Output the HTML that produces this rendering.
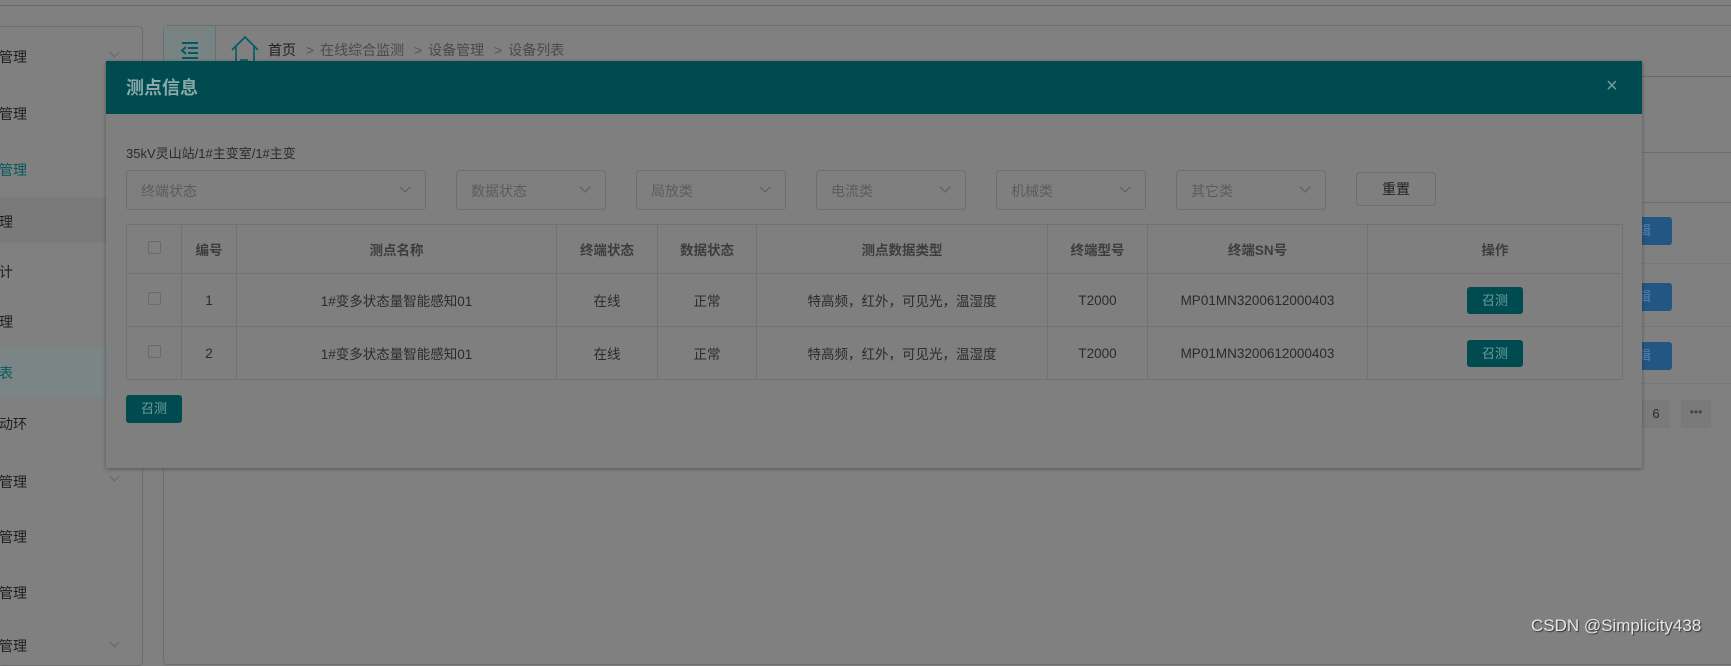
<!DOCTYPE html>
<html><head><meta charset="utf-8"><style>
*{box-sizing:border-box;margin:0;padding:0}
body{width:1731px;height:649px;overflow:hidden;background:#808080;font-family:"Liberation Sans","Noto Sans CJK SC",sans-serif;position:relative;color:#2b2b2b}
.a{position:absolute}
.side{left:-2px;top:26px;width:145px;height:640px;border:1px solid #6e6e6e;border-radius:4px;background:#808080}
.si{position:absolute;left:0;font-size:14px;color:#1e1e1e}
.chev{position:absolute;left:112px;width:7px;height:7px;border-right:1px solid #666;border-bottom:1px solid #666;transform:rotate(45deg)}
.main{left:163px;top:25px;width:1600px;height:640px;border:1px solid #6e6e6e;border-radius:4px;background:#808080}
.modal{left:106px;top:61px;width:1536px;height:407px;background:#7f7f7f;box-shadow:0 1px 4px rgba(0,0,0,.35)}
.hd{left:0;top:0;width:1536px;height:53px;background:#004b4f}
.sel{top:170px;height:40px;border:1px solid #6e6e6e;border-radius:4px;font-size:14px;color:#5c5c5c;padding:10px 0 0 14px}
.sel:after{content:"";position:absolute;right:16px;top:12px;width:7px;height:7px;border-right:1px solid #5c5c5c;border-bottom:1px solid #5c5c5c;transform:rotate(45deg)}
table{position:absolute;left:126px;top:224px;border-collapse:collapse;font-size:13.5px}
td,th{border:1px solid #727272;text-align:center;color:#2b2b2b;font-weight:normal}
th{height:49px;color:#3d3d3d;font-weight:bold}
td{height:53px}
.cb{display:inline-block;width:13px;height:13px;border:1px solid #6a6a6a;border-radius:2px}
.btn{display:inline-block;background:#004b4f;color:#6f9d9f;font-size:13px;border-radius:3px;width:56px;height:27px;line-height:27px;text-align:center}
.blue{left:1632px;width:40px;height:28px;background:#245683;border-radius:3px;color:#5a82a8;font-size:13px;line-height:28px;padding-left:6px}
</style></head><body>
<div class="a" style="left:0;top:5px;width:1731px;height:1px;background:#6a6a6a"></div>
<div class="a side">
<div class="si" style="top:20px">管理</div><div class="chev" style="top:22px"></div>
<div class="si" style="top:77px">管理</div>
<div class="si" style="top:133px;color:#005a5e">管理</div>
<div class="a" style="left:0;top:170px;width:143px;height:46px;background:#7a7a7a"></div>
<div class="si" style="top:185px">理</div>
<div class="si" style="top:235px">计</div>
<div class="si" style="top:285px">理</div>
<div class="a" style="left:0;top:320px;width:143px;height:50px;background:#7b8585"></div>
<div class="si" style="top:336px;color:#005a5e">表</div>
<div class="si" style="top:387px">动环</div>
<div class="si" style="top:445px">管理</div><div class="chev" style="top:446px"></div>
<div class="si" style="top:500px">管理</div>
<div class="si" style="top:556px">管理</div>
<div class="si" style="top:609px">管理</div><div class="chev" style="top:612px"></div>
</div>
<div class="a main">
<div class="a" style="left:0;top:0;width:52px;height:50px;background:#788484;border-right:1px solid #6e6e6e"></div>
<svg class="a" style="left:16px;top:15px" width="20" height="18"><g stroke="#005a5e" stroke-width="2"><path d="M2 2H18M8 7H18M8 12H18M2 17H18"/><path d="M6 6L2 9.5L6 13" fill="none"/></g></svg>
<svg class="a" style="left:66px;top:8px" width="30" height="36"><path d="M2 16L15 3L28 16M6 13V36M24 13V36M11 36V26H17V36" fill="none" stroke="#005a5e" stroke-width="1.6"/></svg>
<div class="a" style="left:104px;top:14px;font-size:14px;color:#1e1e1e">首页 <span style="color:#555;margin:0 6px">&gt;</span><span style="color:#4a4a4a">在线综合监测</span> <span style="color:#555;margin:0 6px">&gt;</span><span style="color:#4a4a4a">设备管理</span> <span style="color:#555;margin:0 6px">&gt;</span><span style="color:#4a4a4a">设备列表</span></div>
<div class="a" style="left:0;top:50px;width:1600px;height:1px;background:#6a6a6a"></div>
<div class="a" style="left:1470px;top:126px;width:140px;height:1px;background:#6e6e6e"></div>
<div class="a" style="left:1470px;top:176px;width:140px;height:1px;background:#6e6e6e"></div>
</div>
<div class="a blue" style="top:217px">辑</div>
<div class="a blue" style="top:283px">辑</div>
<div class="a blue" style="top:342px">辑</div>
<div class="a" style="left:1642px;top:263px;width:89px;height:1px;background:#777"></div>
<div class="a" style="left:1642px;top:326px;width:89px;height:1px;background:#777"></div>
<div class="a" style="left:1642px;top:383px;width:89px;height:1px;background:#777"></div>
<div class="a" style="left:1642px;top:400px;width:28px;height:28px;background:#7a7a7a;font-size:13px;text-align:center;line-height:28px;color:#2b2b2b">6</div>
<div class="a" style="left:1681px;top:400px;width:30px;height:28px;background:#7a7a7a;font-size:12px;text-align:center;line-height:24px;color:#444">•••</div>
<div class="a modal">
<div class="a hd"><div class="a" style="left:20px;top:13px;font-size:18px;font-weight:bold;color:#8aa9aa">测点信息</div><div class="a" style="left:1500px;top:14px;font-size:20px;color:#7a9c9d">×</div></div>
</div>
<div class="a" style="left:126px;top:143px;font-size:13px;color:#2b2b2b">35kV灵山站/1#主变室/1#主变</div>
<div class="a sel" style="left:126px;width:300px">终端状态</div>
<div class="a sel" style="left:456px;width:150px">数据状态</div>
<div class="a sel" style="left:636px;width:150px">局放类</div>
<div class="a sel" style="left:816px;width:150px">电流类</div>
<div class="a sel" style="left:996px;width:150px">机械类</div>
<div class="a sel" style="left:1176px;width:150px">其它类</div>
<div class="a" style="left:1356px;top:172px;width:80px;height:34px;border:1px solid #6e6e6e;border-radius:4px;font-size:14px;text-align:center;line-height:32px;color:#222">重置</div>
<table>
<tr><th style="width:55px"><span class="cb"></span></th><th style="width:55px">编号</th><th style="width:320px">测点名称</th><th style="width:101px">终端状态</th><th style="width:99px">数据状态</th><th style="width:291px">测点数据类型</th><th style="width:100px">终端型号</th><th style="width:220px">终端SN号</th><th style="width:255px">操作</th></tr>
<tr><td><span class="cb"></span></td><td>1</td><td>1#变多状态量智能感知01</td><td>在线</td><td>正常</td><td>特高频，红外，可见光，温湿度</td><td>T2000</td><td>MP01MN3200612000403</td><td><span class="btn">召测</span></td></tr>
<tr><td><span class="cb"></span></td><td>2</td><td>1#变多状态量智能感知01</td><td>在线</td><td>正常</td><td>特高频，红外，可见光，温湿度</td><td>T2000</td><td>MP01MN3200612000403</td><td><span class="btn">召测</span></td></tr>
</table>
<div class="a btn" style="left:126px;top:395px;height:28px">召测</div>
<div class="a" style="left:1531px;top:616px;font-size:17px;color:#e6e6e6;text-shadow:1px 1px 1px #333">CSDN @Simplicity438</div>
</body></html>
